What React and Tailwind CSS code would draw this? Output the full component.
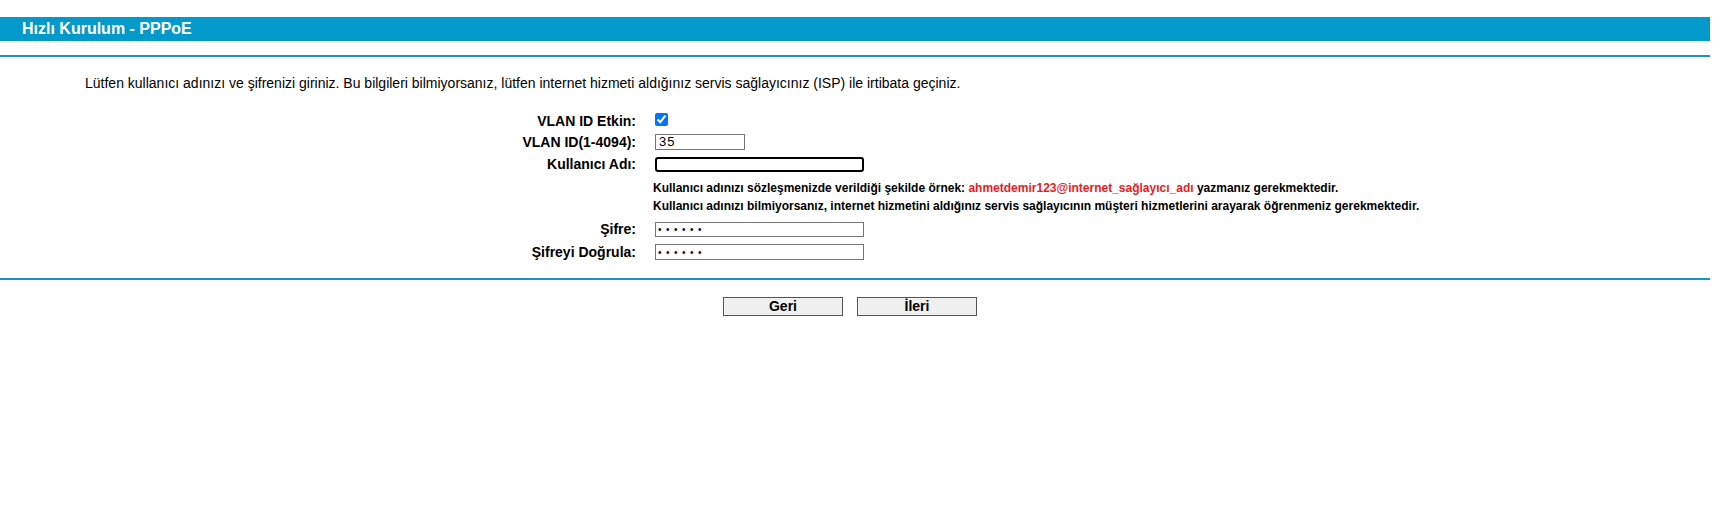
import { useState } from 'react';

// Quick setup step: PPPoE credentials form
function FieldRow({ label, height, children }) {
  return (
    <div className="flex items-center" style={{ height }}>
      <div className="w-[636px] text-right text-[14px] font-bold leading-[16px]">{label}</div>
      <div className="flex items-center pl-[19px]">{children}</div>
    </div>
  );
}

export default function App() {
  const [vlanOn, setVlanOn] = useState(true);
  const [vlanId, setVlanId] = useState('35');
  const [user, setUser] = useState('');

  return (
    <div className="min-h-screen bg-white pt-[17px] font-['Liberation_Sans',Arial,sans-serif] text-black">
      <div className="w-[1710px]">
        <div className="flex h-[24px] items-center bg-[#0399cb] pl-[22px] text-[16px] font-bold text-white">
          Hızlı Kurulum - PPPoE
        </div>
        <div className="mt-[14px] h-[2px] bg-[#1995c3]" />

        <p className="mt-[18px] pl-[85px] text-[14px] leading-[16px]">
          Lütfen kullanıcı adınızı ve şifrenizi giriniz. Bu bilgileri bilmiyorsanız, lütfen internet hizmeti aldığınız servis sağlayıcınız (ISP) ile irtibata geçiniz.
        </p>

        <div className="mt-[20px] flex flex-col">
          <FieldRow label="VLAN ID Etkin:" height={20}>
            <input
              type="checkbox"
              checked={vlanOn}
              onChange={(e) => setVlanOn(e.target.checked)}
              className="m-0 h-[13px] w-[13px] -translate-y-[2px]"
            />
          </FieldRow>
          <FieldRow label="VLAN ID(1-4094):" height={21}>
            <input
              value={vlanId}
              onChange={(e) => setVlanId(e.target.value)}
              className="h-[16px] w-[90px] border border-[#767676] px-[3px] text-[13px] leading-[14px] tracking-[1px] outline-none"
            />
          </FieldRow>
          <FieldRow label="Kullanıcı Adı:" height={24}>
            <input
              value={user}
              onChange={(e) => setUser(e.target.value)}
              className="h-[15px] w-[209px] rounded-[3px] border-2 border-black px-[2px] text-[13px] outline-none"
            />
          </FieldRow>

          <div className="mt-[3px] mb-[2px] pl-[653px] text-[12px] font-bold leading-[18px]">
            <div className="whitespace-nowrap">
              Kullanıcı adınızı sözleşmenizde verildiği şekilde örnek:{' '}
              <span className="text-[#e31e24]">ahmetdemir123@internet_sağlayıcı_adı</span> yazmanız gerekmektedir.
            </div>
            <div className="whitespace-nowrap">
              Kullanıcı adınızı bilmiyorsanız, internet hizmetini aldığınız servis sağlayıcının müşteri hizmetlerini arayarak öğrenmeniz gerekmektedir.
            </div>
          </div>

          <FieldRow label="Şifre:" height={24}>
            <input
              type="password"
              readOnly
              value="123456"
              className="h-[15px] w-[209px] border border-[#767676] px-[2px] text-[10px] tracking-[4.5px] outline-none"
            />
          </FieldRow>
          <FieldRow label="Şifreyi Doğrula:" height={22}>
            <input
              type="password"
              readOnly
              value="123456"
              className="h-[16px] w-[209px] border border-[#767676] px-[2px] text-[10px] tracking-[4.5px] outline-none"
            />
          </FieldRow>
        </div>

        <div className="mt-[15px] h-[2px] bg-[#1995c3]" />

        <div className="mt-[17px] flex gap-[14px] pl-[723px]">
          <button className="h-[19px] w-[120px] border border-[#555] bg-[#f0f0f0] text-[14px] font-bold leading-[17px]">
            Geri
          </button>
          <button className="h-[19px] w-[120px] border border-[#555] bg-[#f0f0f0] text-[14px] font-bold leading-[17px]">
            İleri
          </button>
        </div>
      </div>
    </div>
  );
}
